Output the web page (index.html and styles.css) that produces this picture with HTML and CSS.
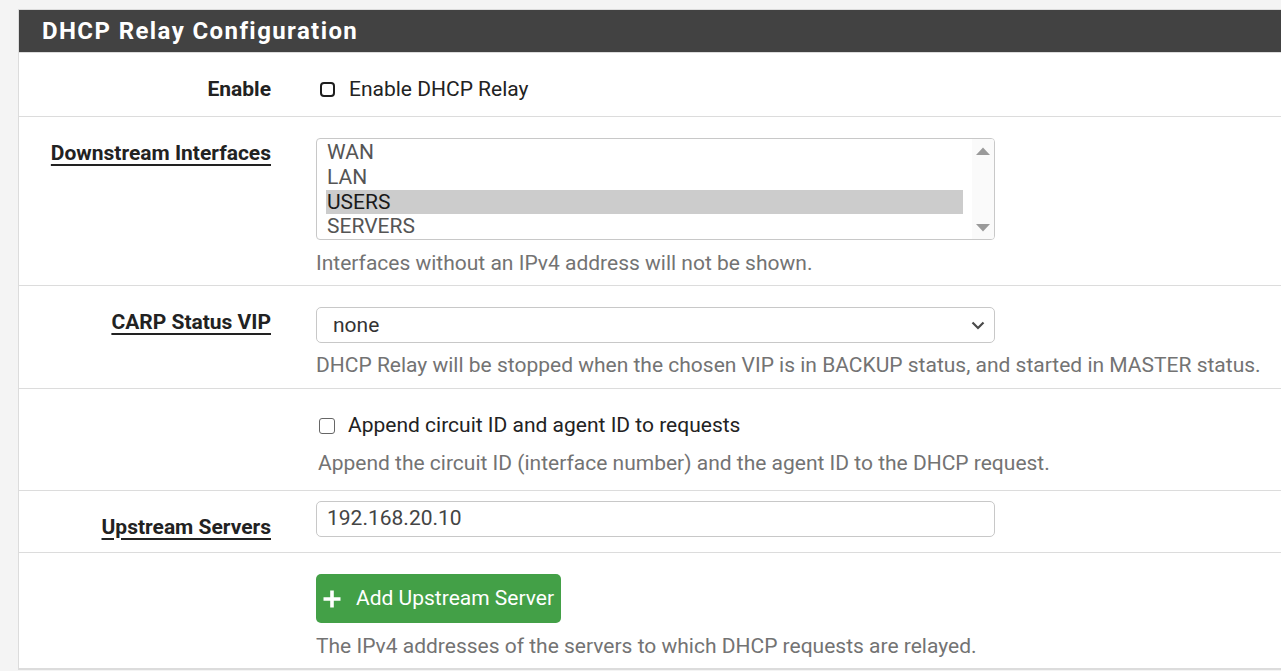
FILE: index.html
```html
<!DOCTYPE html>
<html>
<head>
<meta charset="utf-8">
<link rel="stylesheet" href="styles.css">
</head>
<body>
<div class="panel">
  <div class="panel-heading"><h2 class="panel-title">DHCP Relay Configuration</h2></div>
  <div class="panel-body">
    <div class="form-row row-check">
      <div class="label-col"><span class="label plain">Enable</span></div>
      <div class="field-col">
        <div class="check-line"><span class="checkbox focused"></span><span>Enable DHCP Relay</span></div>
      </div>
    </div>
    <div class="form-row">
      <div class="label-col"><span class="label">Downstream Interfaces</span></div>
      <div class="field-col">
        <div class="listbox">
          <div class="options">
            <div class="option">WAN</div>
            <div class="option">LAN</div>
            <div class="option selected">USERS</div>
            <div class="option">SERVERS</div>
          </div>
          <div class="scrollbar">
            <svg width="16" height="10" viewBox="0 0 16 10"><path d="M1 9 L8 1.5 L15 9 Z" fill="#9a9a9a"/></svg>
            <svg width="16" height="10" viewBox="0 0 16 10"><path d="M1 1 L8 8.5 L15 1 Z" fill="#9a9a9a"/></svg>
          </div>
        </div>
        <div class="help">Interfaces without an IPv4 address will not be shown.</div>
      </div>
    </div>
    <div class="form-row">
      <div class="label-col"><span class="label">CARP Status VIP</span></div>
      <div class="field-col">
        <div class="select">
          <span>none</span>
          <svg width="14" height="9" viewBox="0 0 14 9"><path d="M1.5 1.5 L7 7 L12.5 1.5" fill="none" stroke="#4a4a4a" stroke-width="2.2"/></svg>
        </div>
        <div class="help">DHCP Relay will be stopped when the chosen VIP is in BACKUP status, and started in MASTER status.</div>
      </div>
    </div>
    <div class="form-row row-check">
      <div class="label-col"></div>
      <div class="field-col">
        <div class="check-line"><span class="checkbox"></span><span>Append circuit ID and agent ID to requests</span></div>
        <div class="help help-check">Append the circuit ID (interface number) and the agent ID to the DHCP request.</div>
      </div>
    </div>
    <div class="form-row row-input">
      <div class="label-col"><span class="label">Upstream Servers</span></div>
      <div class="field-col">
        <div class="input">192.168.20.10</div>
      </div>
    </div>
    <div class="form-row last">
      <div class="label-col"></div>
      <div class="field-col">
        <div class="btn-success">
          <svg width="18" height="18" viewBox="0 0 18 18"><path d="M9 0.5 V17.5 M0.5 9 H17.5" stroke="#fff" stroke-width="3.6"/></svg>
          <span>Add Upstream Server</span>
        </div>
        <div class="help">The IPv4 addresses of the servers to which DHCP requests are relayed.</div>
      </div>
    </div>
  </div>
</div>
</body>
</html>
```

FILE: styles.css
```css
html, body {
  margin: 0;
  padding: 0;
  overflow: hidden;
}
body {
  background: #f4f4f4;
  font-family: Roboto, "Liberation Sans", sans-serif;
  font-size: 21px;
  line-height: 25.7px;
  color: #222;
}
.panel {
  margin: 9px 0 0 18px;
  width: 1300px;
  background: #fff;
  border: 1px solid #dcdcdc;
  border-bottom: 2px solid #dcdcdc;
}
.panel-heading {
  background: #424242;
  height: 42px;
  border-bottom: 1px solid #dcdcdc;
  display: flex;
  align-items: center;
  padding-left: 23px;
}
.panel-title {
  margin: 0;
  color: #fff;
  font-size: 24px;
  font-weight: 700;
  letter-spacing: 1.4px;
  line-height: 28px;
}
.form-row {
  display: grid;
  grid-template-columns: 268px 1fr;
  border-bottom: 1px solid #dcdcdc;
}
.form-row.last {
  border-bottom: none;
}
.label-col {
  text-align: right;
  padding: 24px 16px 0 0;
}
.label {
  font-weight: 700;
  color: #222;
  text-decoration: underline;
  text-decoration-thickness: 2px;
  text-underline-offset: 4px;
}
.label.plain {
  text-decoration: none;
}
.field-col {
  padding: 21px 0 9px 29px;
}
.row-check .field-col {
  padding: 24px 0 13px 29px;
}
.row-input .field-col {
  padding: 10px 0 15px 29px;
}
.check-line {
  display: flex;
  align-items: center;
  gap: 13px;
  color: #222;
}
.checkbox {
  width: 16px;
  height: 16px;
  box-sizing: border-box;
  border: 1.5px solid #666;
  border-radius: 3px;
  margin-left: 3px;
}
.checkbox.focused {
  width: 15px;
  height: 15px;
  border: 2.5px solid #1e1e1e;
  border-radius: 4px;
  margin-left: 4px;
  margin-right: 1px;
}
.listbox {
  width: 679px;
  height: 102px;
  box-sizing: border-box;
  border: 1px solid #c8c8c8;
  border-radius: 4px;
  display: flex;
  overflow: hidden;
}
.options {
  flex: 1;
  padding: 1.5px 9px 0 9px;
}
.option {
  height: 24.7px;
  line-height: 24.7px;
  padding-left: 1px;
  color: #555;
}
.option.selected {
  background: #cccccc;
  color: #1a1a1a;
}
.scrollbar {
  width: 22px;
  background: #fafafa;
  display: flex;
  flex-direction: column;
  justify-content: space-between;
  align-items: center;
  padding: 7px 0 6px;
}
.help {
  margin-top: 11px;
  color: #737373;
}
.help-check {
  margin-top: 12px;
  padding-left: 2px;
}
.select {
  width: 679px;
  height: 36px;
  box-sizing: border-box;
  border: 1px solid #c8c8c8;
  border-radius: 5px;
  display: flex;
  align-items: center;
  justify-content: space-between;
  padding: 0 9px 0 16px;
  color: #333;
}
.select + .help {
  margin-top: 10px;
}
.input {
  width: 679px;
  height: 36px;
  box-sizing: border-box;
  border: 1px solid #c8c8c8;
  border-radius: 5px;
  display: flex;
  align-items: center;
  padding: 1px 10px 0;
  color: #444;
}
.btn-success {
  display: inline-flex;
  align-items: center;
  gap: 15px;
  height: 49px;
  box-sizing: border-box;
  padding: 1px 7px 0 7px;
  background: #43a047;
  border-radius: 5px;
  color: #fff;
  white-space: nowrap;
}
.btn-success + .help {
  margin-top: 11px;
}
```
